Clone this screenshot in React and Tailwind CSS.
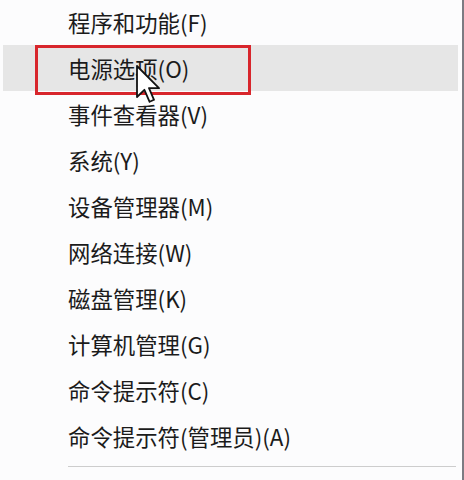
import React from "react";

const items = [
  "程序和功能(F)",
  "电源选项(O)",
  "事件查看器(V)",
  "系统(Y)",
  "设备管理器(M)",
  "网络连接(W)",
  "磁盘管理(K)",
  "计算机管理(G)",
  "命令提示符(C)",
  "命令提示符(管理员)(A)",
];

export default function App() {
  return (
    <div
      className="relative w-[464px] h-[480px] overflow-hidden bg-[#fcfcfd]"
      style={{ fontFamily: '"Noto Sans CJK SC", "Noto Sans", sans-serif' }}
    >
      <div className="w-[464px] h-[480px] border-r-2 border-[#7c7b82] flex flex-col">
        <div className="-mt-px flex flex-col">
          {items.map((t, i) => (
            <div
              key={t}
              className={
                i === 1
                  ? "h-[46px] ml-[3px] mr-[4px] pl-[65px] flex items-center bg-[#e6e6e6] text-[22.4px] text-[#1b1b1b] leading-none"
                  : "h-[46px] ml-[3px] mr-[4px] pl-[65px] flex items-center text-[22.4px] text-[#1b1b1b] leading-none"
              }
            >
              {t}
            </div>
          ))}
        </div>
        <div className="mt-[7px] ml-[68px] mr-[6px] h-px bg-[#cdcdcd]" />
      </div>

      <div className="absolute left-[35px] top-[45px] w-[216px] h-[50px] border-[3px] border-[#d8262c]" />

      <svg
        className="absolute left-[136px] top-[65px]"
        width="26"
        height="38"
        viewBox="0 0 13 19"
      >
        <path
          d="M0.5 0.5 L0.5 16 L4.2 12.4 L6.8 18.4 L9 17.4 L6.5 11.6 L11.5 11.6 Z"
          fill="#ffffff"
          stroke="#111111"
          strokeWidth="0.9"
          strokeLinejoin="round"
        />
      </svg>
    </div>
  );
}
